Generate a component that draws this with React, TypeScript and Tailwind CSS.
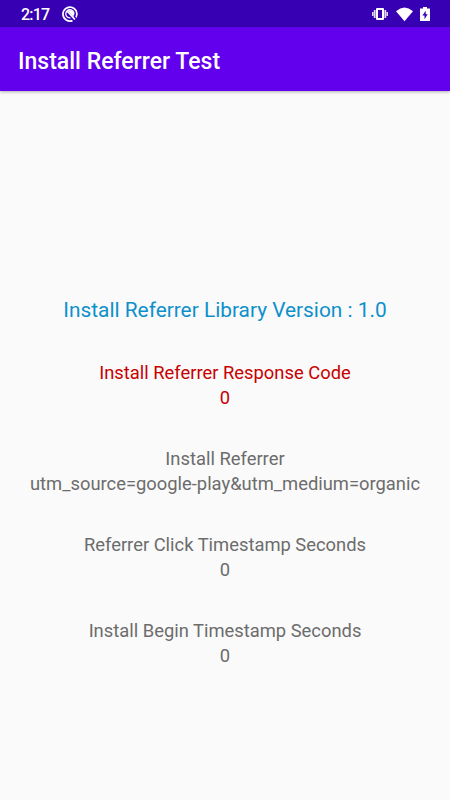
const rows = [
  { label: 'Install Referrer Response Code', value: '0', color: 'text-[#c80000]' },
  { label: 'Install Referrer', value: 'utm_source=google-play&utm_medium=organic', color: 'text-[#6c6c6c]' },
  { label: 'Referrer Click Timestamp Seconds', value: '0', color: 'text-[#6c6c6c]' },
  { label: 'Install Begin Timestamp Seconds', value: '0', color: 'text-[#6c6c6c]' },
];

function StatusBar() {
  return (
    <div className="flex h-[27px] shrink-0 items-center bg-[#3700b3] pr-[18px] pl-[21px] text-white">
      <span className="w-[40px] pt-[3px] text-[16px] leading-[24px] font-medium tracking-[-0.8px]">2:17</span>
      <svg className="mt-px" width="18" height="18" viewBox="0 0 18 18" fill="none" stroke="white">
        <path d="M11.500 15.600A7 7 0 1 1 15.100 12.400" strokeWidth="1.7" />
        <path d="M9.500 12.900A4.100 4.100 0 1 1 12.900 9.500" strokeWidth="1.3" />
        <path d="M6 6L14 14.500" strokeWidth="1.700" />
        <path d="M6.500 5.500Q12 4 13 9L12.500 12z" fill="white" stroke="none" />
      </svg>
      <div className="ml-auto flex items-center">
        <svg width="60" height="20" viewBox="0 0 60 20" fill="white">
          <path d="M5 4h6a1 1 0 0 1 1 1v10a1 1 0 0 1-1 1H5a1 1 0 0 1-1-1V5a1 1 0 0 1 1-1zM6 6v8h4V6z" fillRule="evenodd" />
          <path d="M1.800 6h1.800v8H1.800zM0 8h1.500v4H0zM12.400 6h1.800v8h-1.800zM14.500 8H16v4h-1.500z" opacity=".85" />
          <path d="M24 7.300Q32.500 -.1 41 7.300L32.500 17.300z" />
          <path d="M48 4.500h3V3h4v1.500h3V17H48zM53.700 6.700L50.400 11.500h2.100v3.800l3.200-5h-2z" fillRule="evenodd" />
        </svg>
      </div>
    </div>
  );
}

export default function App() {
  return (
    <div className="flex h-[800px] w-[450px] flex-col overflow-hidden bg-[#fafafa] font-[Roboto,sans-serif]">
      <StatusBar />
      <header className="flex h-[64px] shrink-0 items-center bg-[#6200ee] pt-[5px] pl-[18px] shadow-[0_1px_3px_rgba(0,0,0,0.3)]">
        <h1 className="text-[23px] leading-[28px] font-medium text-white">Install Referrer Test</h1>
      </header>
      <main className="flex flex-col items-center pt-[205px] text-center">
        <p className="text-[20.85px] leading-[28px] text-[#0d90ca]">Install Referrer Library Version : 1.0</p>
        {rows.map((r) => (
          <div key={r.label} className={`mt-[37px] text-[18.38px] leading-[24.5px] whitespace-nowrap ${r.color}`}>
            <p>{r.label}</p>
            <p>{r.value}</p>
          </div>
        ))}
      </main>
    </div>
  );
}
